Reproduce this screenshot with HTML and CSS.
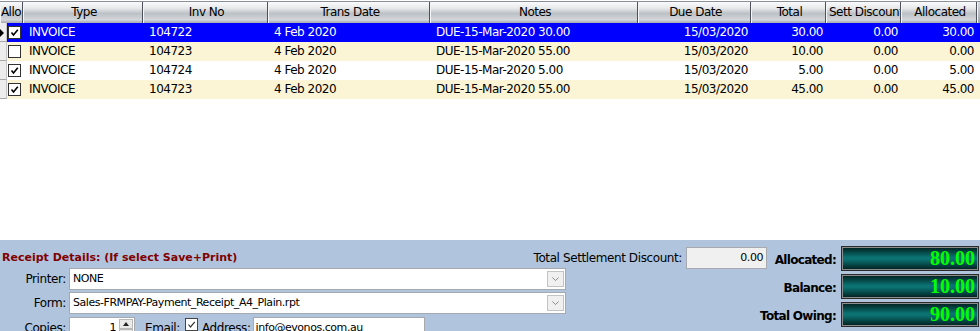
FILE: index.html
```html
<!DOCTYPE html>
<html lang="en">
<head>
  <meta charset="UTF-8">
  <title>Receipt Allocation</title>
  <link rel="stylesheet" href="styles.css">
</head>
<body>
  <div class="grid">
    <div class="head">
      <div class="hc">Allo</div>
      <div class="hc">Type</div>
      <div class="hc">Inv No</div>
      <div class="hc">Trans Date</div>
      <div class="hc">Notes</div>
      <div class="hc">Due Date</div>
      <div class="hc">Total</div>
      <div class="hc">Sett Discount</div>
      <div class="hc">Allocated</div>
      <div class="hc end"></div>
    </div>

    <div class="row sel">
      <div class="ind"><span class="arrow"></span></div>
      <div class="chk"><span class="cb on"><svg viewBox="0 0 11 11"><path d="M2.5 5.5 L4.5 8 L8.8 2.8"/></svg></span></div>
      <div class="c">INVOICE</div>
      <div class="c">104722</div>
      <div class="c">4 Feb 2020</div>
      <div class="c">DUE-15-Mar-2020 30.00</div>
      <div class="c r">15/03/2020</div>
      <div class="c r">30.00</div>
      <div class="c r">0.00</div>
      <div class="c r">30.00</div>
      <div></div>
    </div>
    <div class="row alt">
      <div class="ind"></div>
      <div class="chk"><span class="cb"></span></div>
      <div class="c">INVOICE</div>
      <div class="c">104723</div>
      <div class="c">4 Feb 2020</div>
      <div class="c">DUE-15-Mar-2020 55.00</div>
      <div class="c r">15/03/2020</div>
      <div class="c r">10.00</div>
      <div class="c r">0.00</div>
      <div class="c r">0.00</div>
      <div></div>
    </div>
    <div class="row">
      <div class="ind"></div>
      <div class="chk"><span class="cb on"><svg viewBox="0 0 11 11"><path d="M2.5 5.5 L4.5 8 L8.8 2.8"/></svg></span></div>
      <div class="c">INVOICE</div>
      <div class="c">104724</div>
      <div class="c">4 Feb 2020</div>
      <div class="c">DUE-15-Mar-2020 5.00</div>
      <div class="c r">15/03/2020</div>
      <div class="c r">5.00</div>
      <div class="c r">0.00</div>
      <div class="c r">5.00</div>
      <div></div>
    </div>
    <div class="row alt">
      <div class="ind"></div>
      <div class="chk"><span class="cb on"><svg viewBox="0 0 11 11"><path d="M2.5 5.5 L4.5 8 L8.8 2.8"/></svg></span></div>
      <div class="c">INVOICE</div>
      <div class="c">104723</div>
      <div class="c">4 Feb 2020</div>
      <div class="c">DUE-15-Mar-2020 55.00</div>
      <div class="c r">15/03/2020</div>
      <div class="c r">45.00</div>
      <div class="c r">0.00</div>
      <div class="c r">45.00</div>
      <div></div>
    </div>
  </div>

  <div class="panel">
    <div class="form">
      <div class="title-row">
        <span class="title">Receipt Details: (If select Save+Print)</span>
        <span class="tsd-label">Total Settlement Discount:</span>
        <span class="field tsd">0.00</span>
      </div>
      <div class="frow">
        <label>Printer:</label>
        <div class="field combo">NONE<span class="drop"><svg viewBox="0 0 9 5"><path d="M0.5 0.5 L4.5 4.5 L8.5 0.5"/></svg></span></div>
      </div>
      <div class="frow">
        <label>Form:</label>
        <div class="field combo">Sales-FRMPAY-Payment_Receipt_A4_Plain.rpt<span class="drop"><svg viewBox="0 0 9 5"><path d="M0.5 0.5 L4.5 4.5 L8.5 0.5"/></svg></span></div>
      </div>
      <div class="frow copies">
        <label>Copies:</label>
        <div class="field spin"><span class="val">1</span><span class="btns"><span class="up"></span><span class="down"></span></span></div>
        <span class="lbl email">Email:</span>
        <span class="cb on grey"><svg viewBox="0 0 11 11"><path d="M2.5 5.5 L4.5 8 L8.8 2.8"/></svg></span>
        <span class="lbl addr">Address:</span>
        <div class="field address">info@evonos.com.au</div>
      </div>
    </div>

    <div class="totals">
      <span class="tl">Allocated:</span>
      <span class="lcd">80.00</span>
      <span class="tl">Balance:</span>
      <span class="lcd">10.00</span>
      <span class="tl">Total Owing:</span>
      <span class="lcd">90.00</span>
    </div>
  </div>
</body>
</html>
```

FILE: styles.css
```css
body {
  margin: 0;
  width: 980px;
  height: 331px;
  overflow: hidden;
  background: #fff;
  color: #000;
  font-family: "DejaVu Sans", Tahoma, sans-serif;
  font-size: 11px;
  letter-spacing: -0.45px;
}

/* grid */
.grid {
  height: 240px;
  padding-top: 1px;
  box-sizing: border-box;
  background: #fff;
  font-size: 12px;
  letter-spacing: -0.5px;
}
.head,
.row {
  display: grid;
  grid-template-columns: 23px 120px 125px 162px 208px 113px 75px 75px 76px 1fr;
}
.row {
  grid-template-columns: 7px 16px 120px 125px 162px 208px 113px 75px 75px 76px 1fr;
  height: 19px;
  line-height: 19px;
}
.head {
  height: 22px;
  border-top: 1px solid #8a9099;
  box-sizing: border-box;
}
.hc {
  line-height: 21px;
  text-align: center;
  white-space: nowrap;
  overflow: hidden;
  padding-left: 3px;
  background: linear-gradient(#fbfbfc, #e6e8ea 30%, #bcc1c6 55%, #d3d6da 85%, #a4a9b0);
  border-right: 1px solid #4d525a;
  box-shadow: inset 1px 0 #f4f5f6;
}
.hc:first-child {
  padding-left: 0;
}
.hc.end {
  border-right: none;
  background: linear-gradient(#d9dcdf, #9ea3a9);
}
.row.alt {
  background: #fbf5d6;
}
.row.sel {
  background: #0000ff;
  color: #fff;
}
.ind {
  position: relative;
  background: #ededed;
  border-right: 1px solid #c6c6c6;
  border-bottom: 1px solid #a8a8a8;
  box-sizing: border-box;
}
.arrow {
  position: absolute;
  left: 0;
  top: 6px;
  border-left: 4px solid #000;
  border-top: 4px solid transparent;
  border-bottom: 4px solid transparent;
}
.chk {
  display: flex;
  align-items: center;
  padding-left: 1px;
}
.cb {
  display: inline-block;
  width: 13px;
  height: 13px;
  box-sizing: border-box;
  border: 1px solid #333;
  background: #fff;
}
.cb svg {
  display: none;
  width: 11px;
  height: 11px;
}
.cb.on svg {
  display: block;
}
.cb path {
  fill: none;
  stroke: #000;
  stroke-width: 1.6;
}
.cb.grey {
  border-color: #444;
}
.cb.grey path {
  stroke: #333;
  stroke-width: 1.2;
}
.c {
  padding-left: 6px;
  white-space: nowrap;
  overflow: hidden;
}
.c.r {
  padding-left: 0;
  padding-right: 3px;
  text-align: right;
}

/* bottom panel */
.panel {
  height: 91px;
  box-sizing: border-box;
  padding-top: 7px;
  background: #b0c4de;
  display: flex;
}
.form {
  flex: none;
  width: 767px;
}
.title-row {
  display: flex;
  align-items: center;
  height: 21px;
  padding-left: 2px;
}
.title {
  color: #800000;
  font-weight: bold;
  letter-spacing: 0;
}
.tsd-label {
  margin-left: auto;
  margin-right: 4px;
  font-size: 12px;
  letter-spacing: -0.4px;
}
.field {
  background: #fff;
  border: 1px solid #a6a9ae;
  box-sizing: border-box;
  height: 22px;
  line-height: 20px;
  padding-left: 3px;
  white-space: nowrap;
}
.field.tsd {
  width: 81px;
  height: 22px;
  margin-top: 1px;
  background: #f0f0f0;
  text-align: right;
  padding-right: 3px;
}
.frow {
  display: flex;
  align-items: center;
  height: 22px;
  margin-top: 2px;
}
.frow:nth-child(2) {
  margin-top: 0;
}
.frow.copies {
  margin-top: 3px;
  align-items: flex-start;
}
.frow label,
.lbl {
  font-size: 12px;
  letter-spacing: -0.4px;
}
.frow label {
  width: 66px;
  margin-right: 3px;
  text-align: right;
  white-space: nowrap;
}
.frow.copies label {
  line-height: 22px;
}
.combo {
  position: relative;
  width: 497px;
}
.drop {
  position: absolute;
  right: 1px;
  top: 2px;
  width: 17px;
  height: 16px;
  box-sizing: border-box;
  border: 1px solid #c3c3c3;
  background: #f0f0f0;
  display: flex;
  align-items: center;
  justify-content: center;
}
.drop svg {
  width: 7px;
  height: 4px;
}
.drop path {
  fill: none;
  stroke: #707070;
  stroke-width: 1;
}
.spin {
  width: 66px;
  display: flex;
  padding: 0;
}
.spin .val {
  flex: 1;
  text-align: right;
  padding-right: 3px;
}
.btns {
  width: 14px;
  display: flex;
  flex-direction: column;
  padding: 1px 1px 0 0;
}
.btns span {
  height: 9px;
  background: #eaeaea;
  border: 1px solid #b8b8b8;
  position: relative;
}
.btns .up::after {
  content: "";
  position: absolute;
  left: 3px;
  top: 2px;
  border-bottom: 4px solid #222;
  border-left: 3px solid transparent;
  border-right: 3px solid transparent;
}
.lbl {
  line-height: 22px;
  white-space: nowrap;
}
.email {
  margin-left: 10px;
  margin-right: 5px;
}
.frow.copies .cb {
  margin-top: 1px;
}
.addr {
  margin-left: 4px;
  margin-right: 2px;
}
.address {
  width: 172px;
  padding-left: 2px;
}

/* totals */
.totals {
  flex: 1;
  min-width: 0;
  margin-top: -1px;
  display: grid;
  grid-template-columns: auto 138px;
  grid-auto-rows: 25px;
  row-gap: 3px;
  column-gap: 5px;
  justify-content: end;
  align-content: start;
  padding-right: 1px;
}
.tl {
  align-self: center;
  text-align: right;
  white-space: nowrap;
  font-weight: bold;
  font-size: 12px;
  letter-spacing: -0.7px;
  padding-top: 2px;
}
.lcd {
  border: 1px solid #2a2a2a;
  box-shadow: inset 0 0 0 1px #8c8c8c;
  background: linear-gradient(#021c1c, #0b7272 45%, #0b7070 55%, #021c1c);
  color: #00ff00;
  font-family: "Liberation Serif", "Times New Roman", serif;
  font-weight: bold;
  font-size: 20px;
  letter-spacing: 0;
  line-height: 23px;
  text-align: right;
  padding-right: 3px;
}
```
